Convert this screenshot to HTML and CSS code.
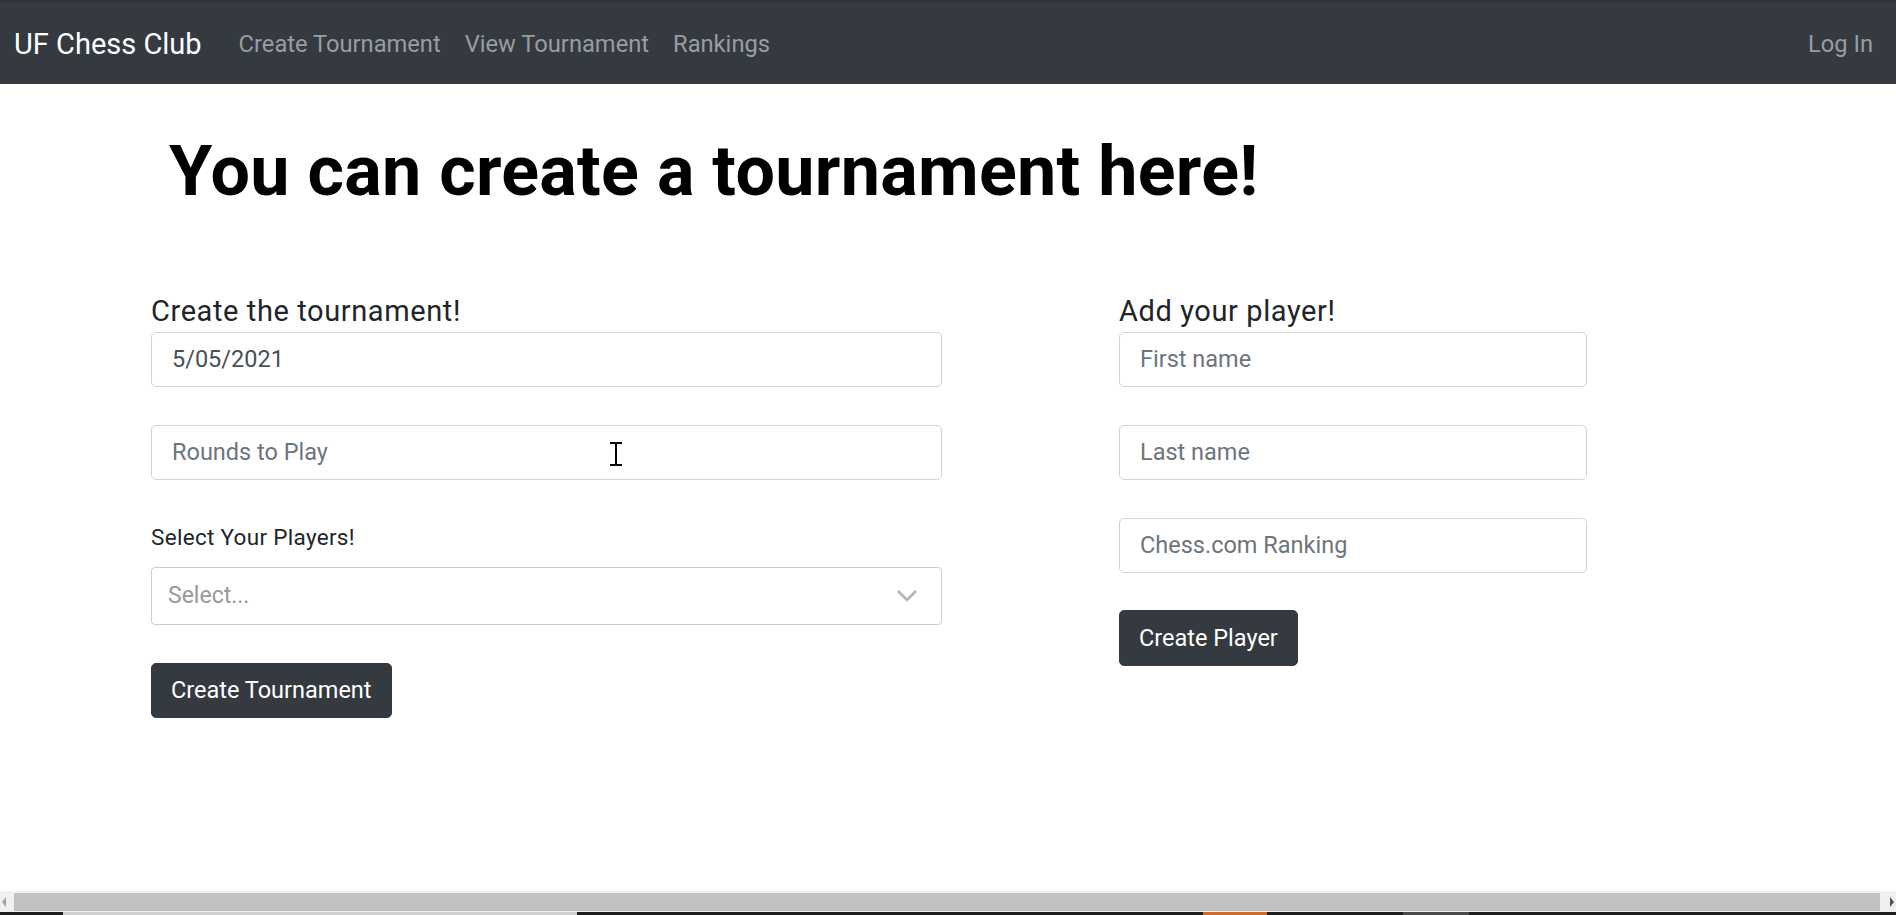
FILE: index.html
```html
<!DOCTYPE html>
<html lang="en">
<head>
<meta charset="utf-8">
<title>UF Chess Club</title>
<link rel="stylesheet" href="styles.css">
</head>
<body>
<nav class="navbar">
  <a class="brand">UF Chess Club</a>
  <a class="nav-link">Create Tournament</a>
  <a class="nav-link">View Tournament</a>
  <a class="nav-link">Rankings</a>
  <a class="nav-link nav-right">Log In</a>
</nav>
<main class="page">
  <h1 class="hero">You can create a tournament here!</h1>
  <div class="row">
    <section class="col col-left">
      <h4 class="col-title">Create the tournament!</h4>
      <div class="field"><input class="form-control" type="text" value="5/05/2021"></div>
      <div class="field field-cursor">
        <input class="form-control" type="text" placeholder="Rounds to Play">
        <svg class="ibeam" width="14" height="24" viewBox="0 0 14 24"><path d="M1 1h5l1 1 1-1h5M7 2v20M1 23h5l1-1 1 1h5" fill="none" stroke="#000" stroke-width="2"/></svg>
      </div>
      <label class="select-label">Select Your Players!</label>
      <div class="select">
        <span class="select-placeholder">Select...</span>
        <svg class="chevron" width="22" height="14" viewBox="0 0 22 14"><path d="M2 2l9 9 9-9" fill="none" stroke="#b3b3b3" stroke-width="2.6"/></svg>
      </div>
      <button class="btn">Create Tournament</button>
    </section>
    <section class="col col-right">
      <h4 class="col-title">Add your player!</h4>
      <div class="field"><input class="form-control" type="text" placeholder="First name"></div>
      <div class="field"><input class="form-control" type="text" placeholder="Last name"></div>
      <div class="field"><input class="form-control" type="text" placeholder="Chess.com Ranking"></div>
      <button class="btn btn-player">Create Player</button>
    </section>
  </div>
</main>
<footer class="hscroll">
  <div class="scrollbar">
    <span class="arrow arrow-left"></span>
    <div class="thumb"></div>
    <span class="arrow arrow-right"></span>
  </div>
  <div class="taskbar">
    <span class="tb-a"></span><span class="tb-b"></span><span class="tb-c"></span>
  </div>
</footer>
</body>
</html>
```
FILE: styles.css
```css
* { box-sizing: border-box; }
html, body { margin: 0; height: 100%; }
body {
  font-family: Roboto, "Noto Sans", sans-serif;
  color: #212529;
  background: #fff;
  display: flex;
  flex-direction: column;
  height: 915px;
  overflow: hidden;
}
.navbar {
  height: 84px;
  flex: none;
  background: #343a40;
  border-top: 2px solid #2e3338;
  display: flex;
  align-items: center;
  padding: 2px 11px 0 14px;
}
.brand {
  color: #fff;
  font-size: 29px;
  margin-right: 25px;
}
.nav-link {
  color: #9a9da0;
  font-size: 23.7px;
  padding: 0 12px;
}
.nav-right { margin-left: auto; }

.page {
  flex: 1;
  padding-left: 151px;
}
.hero {
  margin: 46px 0 0 18px;
  font-size: 70px;
  line-height: 82px;
  font-weight: 700;
  letter-spacing: 0.3px;
  color: #000;
}
.row {
  display: flex;
  gap: 177px;
  margin-top: 83px;
}
.col-left { width: 791px; }
.col-right { width: 468px; }
.col-title {
  margin: 0 0 3px;
  font-size: 29px;
  line-height: 33.6px;
  letter-spacing: 0.6px;
  font-weight: 400;
}
.field { margin-bottom: 38px; }
.field-cursor { position: relative; }
.form-control {
  display: block;
  width: 100%;
  height: 55px;
  border: 1px solid #ced4da;
  border-radius: 5px;
  padding: 0 20px;
  font-family: inherit;
  font-size: 23.5px;
  color: #495057;
  background: #fff;
  outline: none;
}
.form-control::placeholder { color: #6c757d; }
.ibeam {
  position: absolute;
  left: 458px;
  top: 17px;
}
.select-label {
  display: block;
  font-size: 22.5px;
  letter-spacing: 0.3px;
  line-height: 33px;
  padding-top: 3px;
  margin: 0 0 13px;
}
.select {
  height: 58px;
  border: 1px solid #ccc;
  border-radius: 4px;
  display: flex;
  align-items: center;
  justify-content: space-between;
  padding: 0 23px 0 16px;
  margin-bottom: 38px;
}
.select-placeholder {
  font-size: 23px;
  color: #999;
}
.btn {
  display: block;
  height: 55px;
  padding: 0 19px;
  border: 1px solid #343a40;
  border-radius: 5px;
  background: #343a40;
  color: #fff;
  font-family: inherit;
  font-size: 23.5px;
}
.btn-player { margin-top: -1px; height: 56px; }

.hscroll { flex: none; height: 24px; }
.scrollbar {
  height: 21px;
  background: #f0f0f0;
  display: flex;
  align-items: center;
  padding: 0 2px;
}
.thumb {
  flex: 1;
  height: 18px;
  background: #c1c1c1;
  margin: 0 10px 0 8px;
}
.arrow {
  width: 0; height: 0;
  border-top: 5px solid transparent;
  border-bottom: 5px solid transparent;
}
.arrow-left { border-right: 4px solid #a3a3a3; }
.arrow-right { border-left: 4px solid #505050; }
.taskbar {
  height: 3px;
  background: #1f1f1f;
  display: flex;
}
.tb-a { margin-left: 63px; width: 514px; background: #cfcfcf; }
.tb-b { margin-left: 626px; width: 64px; background: #d06a2b; }
.tb-c { margin-left: 136px; width: 66px; background: #4a4a4a; }
```
